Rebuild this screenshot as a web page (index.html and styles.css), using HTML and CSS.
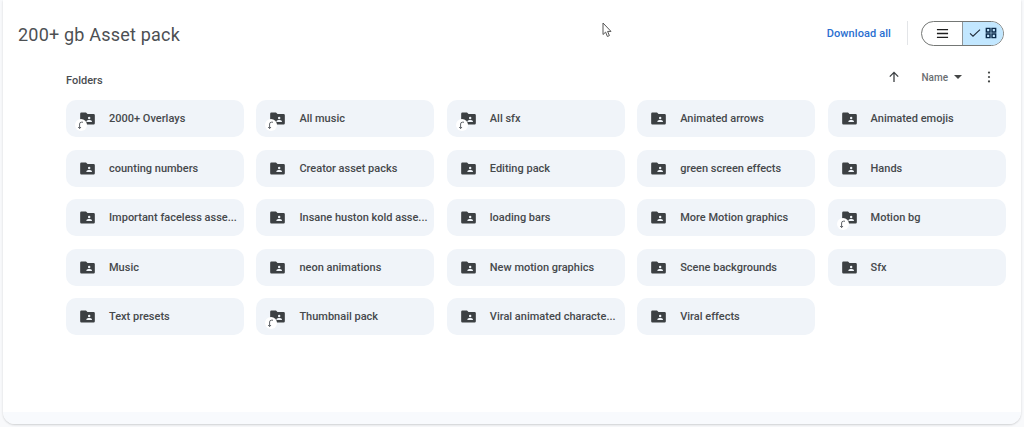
FILE: index.html
```html
<!DOCTYPE html>
<html lang="en">
<head>
<meta charset="utf-8">
<title>200+ gb Asset pack</title>
<link rel="stylesheet" href="styles.css">
</head>
<body>
<svg class="defs" width="0" height="0">
  <symbol id="shared" viewBox="0 0 16 14"><path d="M1.4 0.5h5l1.6 1.7h6.6a1.3 1.3 0 0 1 1.3 1.3v8.6a1.3 1.3 0 0 1-1.3 1.3H1.4A1.3 1.3 0 0 1 .1 12.1V1.8A1.3 1.3 0 0 1 1.4.5z" fill="#3c4043"/><circle cx="9.8" cy="6.4" r="1.3" fill="#f0f4f9"/><path d="M6.8 10.8v-.7c0-1 2.1-1.4 3-1.4s3 .4 3 1.4v.7z" fill="#f0f4f9"/></symbol>
  <symbol id="shortcut" viewBox="0 0 12 12"><circle cx="6" cy="6" r="6" fill="#fff"/><path d="M8 3.2H6.4A1.8 1.8 0 0 0 4.6 5V9.4M3.2 8 4.6 9.6 6 8" fill="none" stroke="#5f6368" stroke-width="1"/></symbol>
</svg>
<main class="panel">
  <header class="top">
    <h1 class="title">200+ gb Asset pack</h1>
    <div class="actions">
      <a class="download">Download all</a>
      <span class="divider"></span>
      <div class="toggle">
        <span class="seg">
          <svg class="ico ico-menu" viewBox="0 0 14 14"><path d="M1 2.8h12M1 7h12M1 11.2h12" stroke="#1f1f1f" stroke-width="1.5"/></svg>
        </span>
        <span class="seg seg-on">
          <svg class="ico" viewBox="0 0 12 12"><path d="M1 6.4 4 9.2 11 2.6" fill="none" stroke="#1f2a37" stroke-width="1.1"/></svg>
          <svg class="ico" viewBox="0 0 14 14"><path d="M1.6 1.6h4.2v4.2H1.6zM8.2 1.6h4.2v4.2H8.2zM1.6 8.2h4.2v4.2H1.6zM8.2 8.2h4.2v4.2H8.2z" fill="none" stroke="#0b2a4a" stroke-width="1.7"/></svg>
        </span>
      </div>
    </div>
  </header>
  <section class="content">
    <div class="bar">
      <h2 class="label">Folders</h2>
      <div class="sort">
        <svg class="arrow" viewBox="0 0 12 12"><path d="M6 11V1.6M1.8 5.6 6 1.4l4.2 4.2" fill="none" stroke="#3c4043" stroke-width="1.3"/></svg>
        <span class="name">Name</span>
        <svg class="caret" viewBox="0 0 8 4"><path d="M0 0h8L4 4z" fill="#444746"/></svg>
        <svg class="more" viewBox="0 0 4 12"><circle cx="2" cy="1.6" r="1.1" fill="#444746"/><circle cx="2" cy="6" r="1.1" fill="#444746"/><circle cx="2" cy="10.4" r="1.1" fill="#444746"/></svg>
      </div>
    </div>
    <div class="grid">
      <div class="card"><span class="fi"><svg class="folder"><use href="#shared"/></svg><svg class="sc"><use href="#shortcut"/></svg></span><span class="text">2000+ Overlays</span></div>
      <div class="card"><span class="fi"><svg class="folder"><use href="#shared"/></svg><svg class="sc"><use href="#shortcut"/></svg></span><span class="text">All music</span></div>
      <div class="card"><span class="fi"><svg class="folder"><use href="#shared"/></svg><svg class="sc"><use href="#shortcut"/></svg></span><span class="text">All sfx</span></div>
      <div class="card"><span class="fi"><svg class="folder"><use href="#shared"/></svg></span><span class="text">Animated arrows</span></div>
      <div class="card"><span class="fi"><svg class="folder"><use href="#shared"/></svg></span><span class="text">Animated emojis</span></div>
      <div class="card"><span class="fi"><svg class="folder"><use href="#shared"/></svg></span><span class="text">counting numbers</span></div>
      <div class="card"><span class="fi"><svg class="folder"><use href="#shared"/></svg></span><span class="text">Creator asset packs</span></div>
      <div class="card"><span class="fi"><svg class="folder"><use href="#shared"/></svg></span><span class="text">Editing pack</span></div>
      <div class="card"><span class="fi"><svg class="folder"><use href="#shared"/></svg></span><span class="text">green screen effects</span></div>
      <div class="card"><span class="fi"><svg class="folder"><use href="#shared"/></svg></span><span class="text">Hands</span></div>
      <div class="card"><span class="fi"><svg class="folder"><use href="#shared"/></svg></span><span class="text">Important faceless asse...</span></div>
      <div class="card"><span class="fi"><svg class="folder"><use href="#shared"/></svg></span><span class="text">Insane huston kold asse...</span></div>
      <div class="card"><span class="fi"><svg class="folder"><use href="#shared"/></svg></span><span class="text">loading bars</span></div>
      <div class="card"><span class="fi"><svg class="folder"><use href="#shared"/></svg></span><span class="text">More Motion graphics</span></div>
      <div class="card"><span class="fi"><svg class="folder"><use href="#shared"/></svg><svg class="sc"><use href="#shortcut"/></svg></span><span class="text">Motion bg</span></div>
      <div class="card"><span class="fi"><svg class="folder"><use href="#shared"/></svg></span><span class="text">Music</span></div>
      <div class="card"><span class="fi"><svg class="folder"><use href="#shared"/></svg></span><span class="text">neon animations</span></div>
      <div class="card"><span class="fi"><svg class="folder"><use href="#shared"/></svg></span><span class="text">New motion graphics</span></div>
      <div class="card"><span class="fi"><svg class="folder"><use href="#shared"/></svg></span><span class="text">Scene backgrounds</span></div>
      <div class="card"><span class="fi"><svg class="folder"><use href="#shared"/></svg></span><span class="text">Sfx</span></div>
      <div class="card"><span class="fi"><svg class="folder"><use href="#shared"/></svg></span><span class="text">Text presets</span></div>
      <div class="card"><span class="fi"><svg class="folder"><use href="#shared"/></svg><svg class="sc"><use href="#shortcut"/></svg></span><span class="text">Thumbnail pack</span></div>
      <div class="card"><span class="fi"><svg class="folder"><use href="#shared"/></svg></span><span class="text">Viral animated characte...</span></div>
      <div class="card"><span class="fi"><svg class="folder"><use href="#shared"/></svg></span><span class="text">Viral effects</span></div>
    </div>
  </section>
  <div class="foot"></div>
</main>
<svg class="cursor" viewBox="0 0 11 16"><path d="M1 1v11.5l2.6-2.4 1.8 4.4 2-.9-1.8-4.2h3.4z" fill="#fff" stroke="#555" stroke-width="1"/></svg>
</body>
</html>
```
FILE: styles.css
```css
* { box-sizing: border-box; }
html, body { margin: 0; height: 427px; overflow: hidden; }
body { background: #f8f9fb; font-family: Roboto, "Liberation Sans", sans-serif; color: #3c4043; padding: 0 3px 3px 3px; position: relative; }
.defs { position: absolute; }
.panel { width: 1018px; height: 424px; background: #fff; border-radius: 0 0 12px 12px; box-shadow: 0 1px 2px rgba(60,64,67,.22); display: flex; flex-direction: column; overflow: hidden; }
.top { height: 68px; padding: 20px 17px 0 15px; display: flex; justify-content: space-between; align-items: flex-start; }
.title { margin: 3px 0 0; font-size: 18px; font-weight: 400; line-height: 24px; color: #4d5053; letter-spacing: .2px; }
.actions { display: flex; align-items: center; height: 26px; }
.download { font-size: 11px; font-weight: 500; color: #2a6fd0; letter-spacing: .1px; }
.divider { width: 1px; height: 24px; background: #e3e5e8; margin: 0 13px 0 16px; }
.toggle { width: 83px; height: 25px; display: flex; border: 1px solid #747775; border-radius: 13px; overflow: hidden; }
.seg { flex: 1; display: flex; align-items: center; justify-content: center; gap: 4px; }
.seg-on { background: #c2e7ff; border-left: 1px solid #8d9599; }
.ico { width: 12px; height: 12px; }
.ico-menu { width: 13px; height: 13px; }
.content { flex: 1; padding: 0 15px 0 63px; }
.bar { height: 32px; display: flex; justify-content: space-between; align-items: flex-start; }
.label { margin: 6px 0 0; font-size: 11px; line-height: 14px; font-weight: 500; color: #4a4d50; }
.sort { display: flex; align-items: center; height: 18px; }
.arrow { width: 12px; height: 12px; }
.name { font-size: 10px; font-weight: 500; color: #6a6e72; margin-left: 21px; }
.caret { width: 8px; height: 4px; margin-left: 6px; }
.more { width: 4px; height: 12px; margin: 0 15px 0 25px; }
.grid { display: grid; grid-template-columns: repeat(5, 178px); grid-auto-rows: 37px; column-gap: 12.4px; row-gap: 12.5px; }
.card { background: #f0f4f9; border-radius: 10px; display: flex; align-items: center; padding-left: 14px; }
.fi { position: relative; width: 15px; height: 13px; margin-right: 14px; }
.folder { width: 15px; height: 13px; display: block; }
.sc { position: absolute; left: -5px; top: 7px; width: 12px; height: 12px; }
.text { font-size: 11px; font-weight: 500; color: #46494c; white-space: nowrap; }
.foot { height: 12px; background: #f8fafd; }
.cursor { position: absolute; left: 602px; top: 22px; width: 11px; height: 16px; }
```
